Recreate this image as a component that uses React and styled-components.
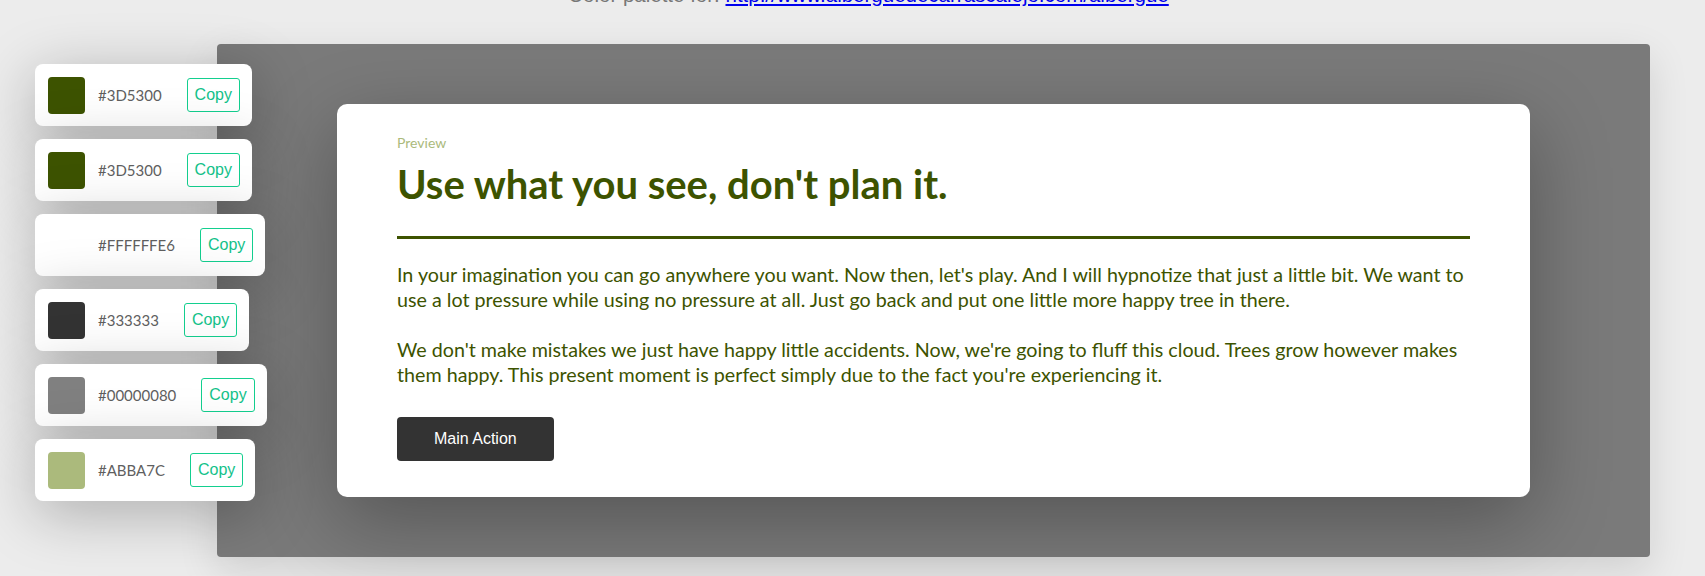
import React from "react";
import styled, { createGlobalStyle } from "styled-components";

const Global = createGlobalStyle`
  html, body { margin: 0; padding: 0; background: #ececec; }
  body { font-family: "Liberation Sans", Arial, sans-serif; overflow: hidden; }
`;

const Page = styled.div`
  position: relative;
  width: 1705px;
  height: 576px;
  overflow: hidden;
`;

const Title = styled.p`
  margin: -17px 0 0 0;
  padding-left: 32px;
  height: 23px;
  font-size: 20.5px;
  line-height: 23px;
  text-align: center;
  color: #777;
  a { color: #0000ee; text-decoration: underline; }
`;

const Panel = styled.section`
  margin: 38px 0 0 217px;
  width: 1433px;
  height: 513px;
  box-sizing: border-box;
  padding: 60px 120px;
  background: #7a7a7a;
  border-radius: 4px;
  box-shadow: 0 14px 40px rgba(0, 0, 0, 0.12);
`;

const Card = styled.article`
  box-sizing: border-box;
  height: 393px;
  padding: 31px 60px 36px;
  background: #fff;
  border-radius: 10px;
  box-shadow: 0 24px 80px rgba(0, 0, 0, 0.3);
  font-family: Lato, "Liberation Sans", sans-serif;
  color: #3d5300;
`;

const Eyebrow = styled.div`
  font-size: 14px;
  line-height: 16.8px;
  color: #abba7c;
`;

const Heading = styled.h1`
  margin: 8px 0 0;
  font-size: 40px;
  line-height: 48px;
  font-weight: 700;
  color: #3d5300;
`;

const Rule = styled.hr`
  margin: 28px 0 0;
  border: 0;
  height: 3px;
  background: #3d5300;
`;

const Text = styled.p`
  margin: ${(p) => (p.$first ? "23px" : "25px")} 0 0;
  font-size: 19.7px;
  line-height: 25px;
  color: #3d5300;
`;

const MainButton = styled.button`
  margin-top: 30px;
  height: 44px;
  padding: 0 37px;
  border: 0;
  border-radius: 4px;
  background: #333;
  color: #fff;
  font-family: "Liberation Sans", Arial, sans-serif;
  font-size: 16px;
`;

const Palette = styled.div`
  position: absolute;
  left: 35px;
  top: 64px;
  display: flex;
  flex-direction: column;
  align-items: flex-start;
  gap: 13px;
`;

const Row = styled.div`
  display: inline-flex;
  align-items: center;
  gap: 13px;
  height: 62px;
  box-sizing: border-box;
  padding: 0 12px 0 13px;
  background: #fff;
  border-radius: 8px;
  box-shadow: 0 12px 60px rgba(0, 0, 0, 0.28);
`;

const Swatch = styled.div`
  width: 37px;
  height: 37px;
  border-radius: 4px;
  background: ${(p) => p.$color};
`;

const Hex = styled.span`
  font-family: Lato, "Liberation Sans", sans-serif;
  font-size: 15px;
  color: #5f5f5f;
`;

const CopyButton = styled.button`
  margin-left: 12px;
  height: 34px;
  padding: 0 7px;
  border: 1px solid #13cf8f;
  border-radius: 3px;
  background: #fff;
  color: #13c28a;
  font-family: "Liberation Sans", Arial, sans-serif;
  font-size: 16px;
`;

const colors = [
  { hex: "#3D5300", css: "#3d5300" },
  { hex: "#3D5300", css: "#3d5300" },
  { hex: "#FFFFFFE6", css: "rgba(255,255,255,0.9)" },
  { hex: "#333333", css: "#333333" },
  { hex: "#00000080", css: "#808080" },
  { hex: "#ABBA7C", css: "#abba7c" },
];

export default function App() {
  return (
    <>
      <Global />
      <Page>
        <Title>
          Color palette for:{" "}
          <a href="#">http://www.alberguedecarrascalejo.com/albergue</a>
        </Title>
        <Panel>
          <Card>
            <Eyebrow>Preview</Eyebrow>
            <Heading>Use what you see, don't plan it.</Heading>
            <Rule />
            <Text $first>
              In your imagination you can go anywhere you want. Now then, let's play. And I will
              hypnotize that just a little bit. We want to use a lot pressure while using no
              pressure at all. Just go back and put one little more happy tree in there.
            </Text>
            <Text>
              We don't make mistakes we just have happy little accidents. Now, we're going to fluff
              this cloud. Trees grow however makes them happy. This present moment is perfect simply
              due to the fact you're experiencing it.
            </Text>
            <MainButton>Main Action</MainButton>
          </Card>
        </Panel>
        <Palette>
          {colors.map((c, i) => (
            <Row key={i}>
              <Swatch $color={c.css} />
              <Hex>{c.hex}</Hex>
              <CopyButton>Copy</CopyButton>
            </Row>
          ))}
        </Palette>
      </Page>
    </>
  );
}
